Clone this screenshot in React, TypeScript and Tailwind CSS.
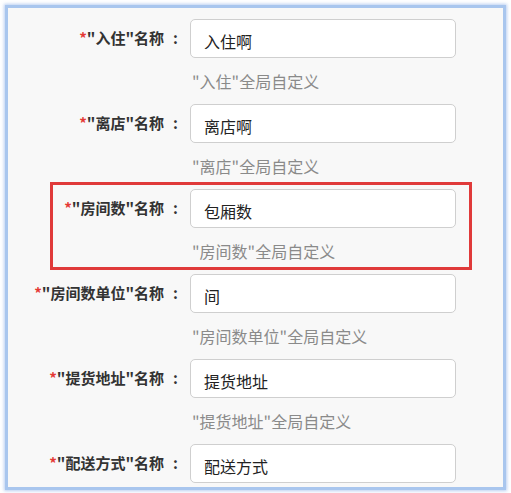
import React from "react";

type Row = { name: string; value: string };

const rows: Row[] = [
  { name: "入住", value: "入住啊" },
  { name: "离店", value: "离店啊" },
  { name: "房间数", value: "包厢数" },
  { name: "房间数单位", value: "间" },
  { name: "提货地址", value: "提货地址" },
  { name: "配送方式", value: "配送方式" },
];

const font = { fontFamily: '"Noto Sans CJK SC", "Noto Sans", sans-serif' };

function Field({ row, labelW, boxed, noHelp }: { row: Row; labelW: string; boxed?: boolean; noHelp?: boolean }) {
  return (
    <div className={boxed ? "h-[78px]" : noHelp ? "h-[39px]" : "h-[85px]"}>
      <div className="flex h-[39px] items-center">
        <div className={`${labelW} shrink-0 text-right text-[15px] font-bold text-[#333] pr-[12px]`}>
          <span className="text-[#e53935]">*</span>"{row.name}"名称<span className="ml-[9px]">:</span>
        </div>
        <div className="flex h-[39px] w-[266px] items-center rounded-[5px] border border-[#cfcfcf] bg-white pl-[13px] pt-[5px] text-[16px] text-[#222]">
          {row.value}
        </div>
      </div>
      {!noHelp && (
        <div className="flex">
          <div className={`${labelW} shrink-0`} />
          <div className="pl-[2px] pt-[13px] text-[16px] leading-[20px] text-[#8a8a8a]">"{row.name}"全局自定义</div>
        </div>
      )}
    </div>
  );
}

export default function App() {
  return (
    <div className="h-[493px] w-[511px] overflow-hidden bg-white p-[5px]" style={font}>
      <div className="h-[485px] w-[501px] overflow-hidden border-[3px] border-[#a9c6ee] bg-[#f8f8f8] pt-[11px] shadow-[0_0_3px_1px_rgba(120,160,230,0.5)]">
        <Field row={rows[0]} labelW="w-[182px]" />
        <Field row={rows[1]} labelW="w-[182px]" />
        <div className="-mt-[7px] mb-[4px] ml-[42px] w-[422px] border-[3px] border-[#e03a3a] pt-[4px]">
          <Field row={rows[2]} labelW="w-[137px]" boxed />
        </div>
        <Field row={rows[3]} labelW="w-[182px]" />
        <Field row={rows[4]} labelW="w-[182px]" />
        <Field row={rows[5]} labelW="w-[182px]" noHelp />
      </div>
    </div>
  );
}
